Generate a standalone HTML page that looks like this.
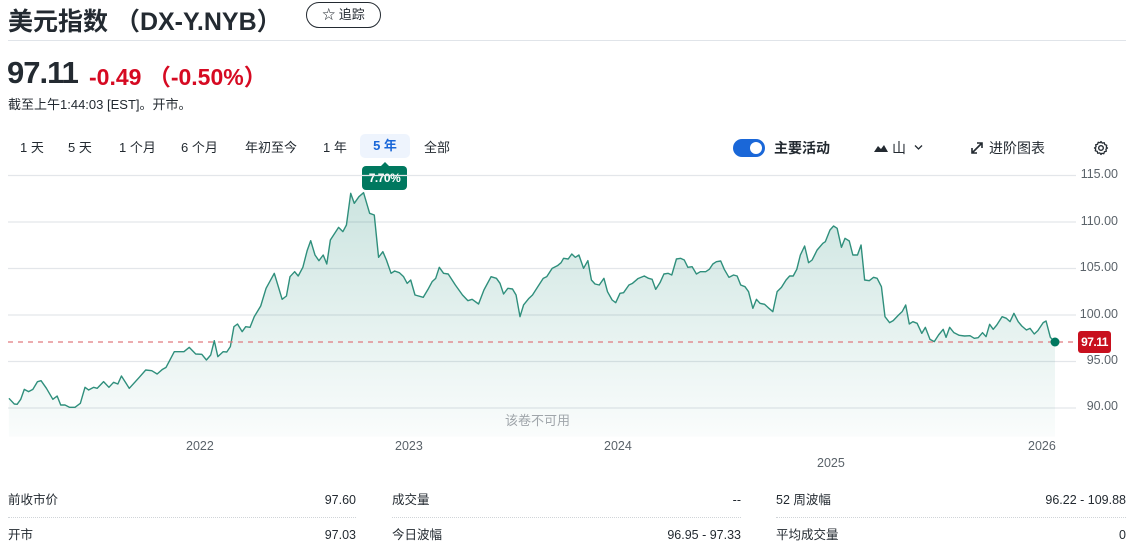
<!DOCTYPE html>
<html><head><meta charset="utf-8"><style>
body{margin:0;width:1137px;height:547px;overflow:hidden;background:#fff;font-family:"Liberation Sans","Noto Sans CJK SC",sans-serif;color:#232a31;position:relative}
.a{position:absolute;white-space:nowrap}
.tab{position:absolute;top:138px;font-size:13px;height:20px;line-height:20px;color:#232a31}
.ax{position:absolute;right:19px;font-size:12.5px;color:#5b636a}
.yr{position:absolute;font-size:12.5px;color:#5b636a}
.row{position:absolute;height:34px;font-size:12.5px;line-height:34px;border-bottom:1px dotted #d0d4d8}
.row span{float:right}
</style></head><body>
<div class="a" style="left:8px;top:2px;font-size:25px;font-weight:bold;">美元指数 （DX-Y.NYB）</div>
<div class="a" style="left:306px;top:2px;width:73px;height:24px;border:1px solid #232a31;border-radius:13px;font-size:13px;line-height:24px;text-align:center">☆ 追踪</div>
<div class="a" style="left:8px;top:40px;width:1118px;border-top:1px solid #e0e4e9"></div>
<div class="a" style="left:7px;top:55px;font-size:31px;font-weight:bold;letter-spacing:-1px">97.11</div>
<div class="a" style="left:89px;top:58px;font-size:23px;font-weight:bold;color:#d60a22">-0.49 （-0.50%）</div>
<div class="a" style="left:8px;top:94px;font-size:13px">截至上午1:44:03 [EST]。开市。</div>
<div class="tab" style="left:20px">1 天</div>
<div class="tab" style="left:68px">5 天</div>
<div class="tab" style="left:119px">1 个月</div>
<div class="tab" style="left:181px">6 个月</div>
<div class="tab" style="left:245px">年初至今</div>
<div class="tab" style="left:323px">1 年</div>
<div class="tab" style="left:360px;width:50px;text-align:center;background:#eef4fd;border-radius:5px;color:#1a67d8;height:24px;top:134px;line-height:24px;font-weight:bold">5 年</div>
<div class="tab" style="left:424px">全部</div>
<div class="a" style="left:362px;top:166px;width:45px;height:24px;background:#00785f;border-radius:4px;color:#fff;font-size:12px;font-weight:bold;line-height:24px;text-align:center;letter-spacing:-0.5px">7.70%</div>
<div class="a" style="left:380px;top:162px;border:5px solid transparent;border-bottom-color:#00785f;border-top:0"></div>
<div class="a" style="left:733px;top:139px;width:32px;height:18px;background:#1a67d8;border-radius:9px"><div style="position:absolute;right:3px;top:3px;width:12px;height:12px;border-radius:50%;background:#fff"></div></div>
<div class="a" style="left:774px;top:138px;font-size:14px;font-weight:bold;line-height:20px">主要活动</div>
<svg class="a" style="left:873px;top:142px" width="16" height="12"><path d="M1 10 L5 4 L8 7 L11 3 L15 10Z" fill="#232a31"/></svg>
<div class="a" style="left:892px;top:138px;font-size:14px;line-height:20px">山</div>
<svg class="a" style="left:914px;top:144px" width="9" height="7"><path d="M1 1.5L4.5 5 8 1.5" stroke="#232a31" stroke-width="1.3" fill="none"/></svg>
<svg class="a" style="left:970px;top:141px" width="14" height="14"><path d="M2 12L12 2M7 2h5v5M2 7v5h5" stroke="#232a31" stroke-width="1.6" fill="none"/></svg>
<div class="a" style="left:989px;top:138px;font-size:14px;line-height:20px">进阶图表</div>
<svg class="a" style="left:1093px;top:140px" width="16" height="16" viewBox="0 0 16 16"><circle cx="8" cy="8" r="2.3" stroke="#232a31" stroke-width="1.4" fill="none"/><path d="M8 1.5l1.2 1.6 2-.4.6 1.9 1.9.6-.4 2L14.5 8l-1.6 1.2.4 2-1.9.6-.6 1.9-2-.4L8 14.5l-1.2-1.6-2 .4-.6-1.9-1.9-.6.4-2L1.5 8l1.6-1.2-.4-2 1.9-.6.6-1.9 2 .4z" stroke="#232a31" stroke-width="1.3" fill="none" stroke-linejoin="round"/></svg>

<svg class="a" style="left:0;top:0" width="1137" height="547">
<defs><linearGradient id="g" x1="0" y1="0" x2="0" y2="1"><stop offset="0" stop-color="#007a64" stop-opacity="0.2"/><stop offset="1" stop-color="#007a64" stop-opacity="0.02"/></linearGradient></defs>
<g stroke="#e3e6ea" stroke-width="1.3">
<line x1="8" x2="1076" y1="175.5" y2="175.5"/><line x1="8" x2="1076" y1="222" y2="222"/><line x1="8" x2="1076" y1="268.5" y2="268.5"/><line x1="8" x2="1076" y1="315" y2="315"/><line x1="8" x2="1076" y1="361.5" y2="361.5"/><line x1="8" x2="1076" y1="408" y2="408"/>
</g>
<g transform="translate(0,170) scale(0.35714,0.33333)">
<path id="p" fill="url(#g)" stroke="none" d="M25 685 L40 702 48 703 58 688 68 658 80 665 92 658 105 635 115 632 130 655 148 688 160 678 170 705 182 705 195 712 210 712 225 700 238 652 248 660 262 652 272 655 290 635 305 652 318 637 330 642 340 618 362 655 390 622 408 600 425 602 440 612 455 598 465 592 488 545 515 545 530 532 548 552 565 553 578 570 590 555 600 512 610 560 625 545 635 546 645 530 655 470 665 462 678 485 688 470 700 472 712 440 730 408 745 355 768 310 790 388 802 378 812 320 825 305 835 318 848 292 860 242 870 212 882 255 893 272 905 255 915 282 925 210 948 172 960 185 970 165 982 70 992 100 1005 80 1018 68 1035 130 1048 135 1060 262 1072 245 1082 270 1095 310 1105 303 1118 308 1130 320 1140 340 1150 330 1162 375 1185 382 1200 355 1210 335 1220 325 1230 292 1242 310 1255 312 1275 345 1295 375 1310 392 1322 388 1340 402 1355 360 1375 320 1390 325 1400 340 1410 372 1422 355 1435 357 1445 375 1456 440 1466 405 1481 385 1491 375 1506 350 1521 325 1531 320 1546 295 1561 287 1571 278 1578 265 1591 267 1601 252 1611 262 1621 255 1634 295 1646 272 1656 330 1666 342 1678 345 1691 325 1701 365 1714 390 1724 398 1736 370 1746 368 1761 345 1771 340 1786 326 1804 318 1816 325 1826 328 1836 358 1848 338 1859 312 1871 310 1881 315 1894 267 1906 265 1916 270 1926 292 1938 290 1950 312 1961 305 1976 305 1986 298 1996 282 2006 275 2018 273 2028 298 2041 322 2054 315 2064 318 2074 345 2086 350 2096 365 2108 415 2118 388 2128 400 2141 403 2151 413 2164 425 2176 365 2188 352 2201 330 2211 318 2221 318 2231 298 2241 255 2253 228 2264 278 2274 270 2288 240 2304 220 2311 215 2324 180 2334 168 2344 175 2356 232 2366 205 2378 213 2388 255 2401 255 2411 225 2421 330 2434 332 2446 322 2456 325 2468 350 2478 440 2491 458 2501 452 2516 435 2526 425 2536 405 2546 462 2556 455 2568 460 2581 490 2591 472 2604 508 2616 515 2628 495 2641 478 2649 502 2659 472 2671 488 2686 496 2701 498 2716 497 2728 505 2739 503 2751 488 2761 500 2771 463 2781 478 2791 465 2806 440 2818 445 2828 455 2839 430 2851 455 2861 468 2874 480 2884 475 2896 492 2906 482 2921 458 2929 453 2941 502 2954 517 L2954 800 L25 800Z"/>
<path fill="none" stroke="#2f8f7c" stroke-width="1.4" vector-effect="non-scaling-stroke" stroke-linejoin="round" d="M25 685 L40 702 48 703 58 688 68 658 80 665 92 658 105 635 115 632 130 655 148 688 160 678 170 705 182 705 195 712 210 712 225 700 238 652 248 660 262 652 272 655 290 635 305 652 318 637 330 642 340 618 362 655 390 622 408 600 425 602 440 612 455 598 465 592 488 545 515 545 530 532 548 552 565 553 578 570 590 555 600 512 610 560 625 545 635 546 645 530 655 470 665 462 678 485 688 470 700 472 712 440 730 408 745 355 768 310 790 388 802 378 812 320 825 305 835 318 848 292 860 242 870 212 882 255 893 272 905 255 915 282 925 210 948 172 960 185 970 165 982 70 992 100 1005 80 1018 68 1035 130 1048 135 1060 262 1072 245 1082 270 1095 310 1105 303 1118 308 1130 320 1140 340 1150 330 1162 375 1185 382 1200 355 1210 335 1220 325 1230 292 1242 310 1255 312 1275 345 1295 375 1310 392 1322 388 1340 402 1355 360 1375 320 1390 325 1400 340 1410 372 1422 355 1435 357 1445 375 1456 440 1466 405 1481 385 1491 375 1506 350 1521 325 1531 320 1546 295 1561 287 1571 278 1578 265 1591 267 1601 252 1611 262 1621 255 1634 295 1646 272 1656 330 1666 342 1678 345 1691 325 1701 365 1714 390 1724 398 1736 370 1746 368 1761 345 1771 340 1786 326 1804 318 1816 325 1826 328 1836 358 1848 338 1859 312 1871 310 1881 315 1894 267 1906 265 1916 270 1926 292 1938 290 1950 312 1961 305 1976 305 1986 298 1996 282 2006 275 2018 273 2028 298 2041 322 2054 315 2064 318 2074 345 2086 350 2096 365 2108 415 2118 388 2128 400 2141 403 2151 413 2164 425 2176 365 2188 352 2201 330 2211 318 2221 318 2231 298 2241 255 2253 228 2264 278 2274 270 2288 240 2304 220 2311 215 2324 180 2334 168 2344 175 2356 232 2366 205 2378 213 2388 255 2401 255 2411 225 2421 330 2434 332 2446 322 2456 325 2468 350 2478 440 2491 458 2501 452 2516 435 2526 425 2536 405 2546 462 2556 455 2568 460 2581 490 2591 472 2604 508 2616 515 2628 495 2641 478 2649 502 2659 472 2671 488 2686 496 2701 498 2716 497 2728 505 2739 503 2751 488 2761 500 2771 463 2781 478 2791 465 2806 440 2818 445 2828 455 2839 430 2851 455 2861 468 2874 480 2884 475 2896 492 2906 482 2921 458 2929 453 2941 502 2954 517"/>
</g>
<line x1="8" x2="1076" y1="342" y2="342" stroke="#e07a7f" stroke-width="1.3" stroke-dasharray="5,5"/>
<circle cx="1055" cy="342" r="4.5" fill="#00785f"/>
</svg>
<div class="a" style="left:1078px;top:331px;width:33px;height:22px;background:#c8101e;border-radius:3px;color:#fff;font-size:12px;font-weight:bold;line-height:22px;text-align:center;letter-spacing:-0.5px">97.11</div>
<div class="ax" style="top:167px">115.00</div>
<div class="ax" style="top:214px">110.00</div>
<div class="ax" style="top:260px">105.00</div>
<div class="ax" style="top:307px">100.00</div>
<div class="ax" style="top:353px">95.00</div>
<div class="ax" style="top:399px">90.00</div>
<div class="a" style="left:505px;top:410px;font-size:13px;color:#a0a6ab">该卷不可用</div>
<div class="yr" style="left:186px;top:439px">2022</div>
<div class="yr" style="left:395px;top:439px">2023</div>
<div class="yr" style="left:604px;top:439px">2024</div>
<div class="yr" style="left:817px;top:456px">2025</div>
<div class="yr" style="left:1028px;top:439px">2026</div>
<div class="row" style="left:8px;top:483px;width:348px">前收市价<span>97.60</span></div>
<div class="row" style="left:392px;top:483px;width:349px">成交量<span>--</span></div>
<div class="row" style="left:776px;top:483px;width:350px">52 周波幅<span>96.22 - 109.88</span></div>
<div class="row" style="left:8px;top:518px;width:348px;border:0">开市<span>97.03</span></div>
<div class="row" style="left:392px;top:518px;width:349px;border:0">今日波幅<span>96.95 - 97.33</span></div>
<div class="row" style="left:776px;top:518px;width:350px;border:0">平均成交量<span>0</span></div>
</body></html>
